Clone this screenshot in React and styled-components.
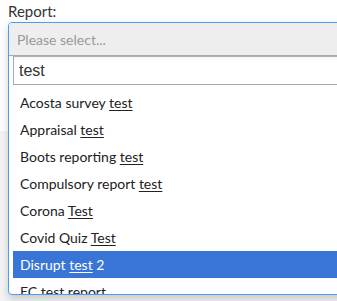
import React from "react";
import styled, { createGlobalStyle } from "styled-components";

const Global = createGlobalStyle`
  html, body { margin: 0; padding: 0; background: #fff; overflow: hidden; }
  body { font-family: Lato, "Noto Sans", sans-serif; color: #333; }
`;

const Page = styled.div`
  position: relative;
  width: 337px;
  height: 301px;
  overflow: hidden;
`;

const Backdrop = styled.div`
  position: absolute;
  left: 0;
  right: 0;
  top: 131px;
  bottom: 0;
  background: #f4f4f4;
`;

const Field = styled.div`
  position: relative;
  padding: 3px 0 0 8px;
`;

const Label = styled.label`
  display: block;
  font-size: 15px;
  line-height: 17px;
  color: #333;
  margin-bottom: 2px;
`;

const Select = styled.div`
  width: 420px;
  height: 271px;
  border: 1px solid #4c9cf2;
  border-radius: 4px;
  background: #fff;
  box-shadow: 0 4px 8px rgba(0, 0, 0, 0.18);
  overflow: hidden;
  display: flex;
  flex-direction: column;
`;

const Selection = styled.div`
  flex: none;
  height: 32px;
  background: #eee;
  border-bottom: 1px solid #aaa;
  display: flex;
  align-items: center;
  padding-left: 8px;
  font-size: 14px;
  color: #999;
  box-shadow: 0 2px 4px rgba(0, 0, 0, 0.06);
  position: relative;
  z-index: 1;
`;

const SearchWrap = styled.div`
  flex: none;
  padding: 0 0 0 4px;
`;

const SearchInput = styled.div`
  height: 27px;
  border: 1px solid #aaa;
  border-top-color: #bbb;
  display: flex;
  align-items: center;
  padding-left: 5px;
  font-family: "Liberation Sans", Arial, sans-serif;
  font-size: 16px;
  color: #333;
`;

const Results = styled.ul`
  list-style: none;
  margin: 0;
  padding: 4px 0 0 4px;
  flex: 1;
  overflow: hidden;
`;

const Item = styled.li`
  height: 17px;
  line-height: 17px;
  padding: 5px 7px;
  font-size: 14px;
  color: ${(p) => (p.$active ? "#fff" : "#222")};
  background: ${(p) => (p.$active ? "#3875d7" : "transparent")};
  white-space: nowrap;
`;

const Match = styled.span`
  text-decoration: underline;
  text-underline-offset: 2px;
`;

const items = [
  ["Acosta survey ", "test", ""],
  ["Appraisal ", "test", ""],
  ["Boots reporting ", "test", ""],
  ["Compulsory report ", "test", ""],
  ["Corona ", "Test", ""],
  ["Covid Quiz ", "Test", ""],
  ["Disrupt ", "test", " 2"],
  ["EC ", "test", " report"],
];

export default function App() {
  return (
    <>
      <Global />
      <Page>
        <Backdrop />
        <Field>
          <Label>Report:</Label>
          <Select>
            <Selection>Please select...</Selection>
            <SearchWrap>
              <SearchInput>test</SearchInput>
            </SearchWrap>
            <Results>
              {items.map(([a, m, b], i) => (
                <Item key={i} $active={i === 6}>
                  {a}
                  <Match>{m}</Match>
                  {b}
                </Item>
              ))}
            </Results>
          </Select>
        </Field>
      </Page>
    </>
  );
}
